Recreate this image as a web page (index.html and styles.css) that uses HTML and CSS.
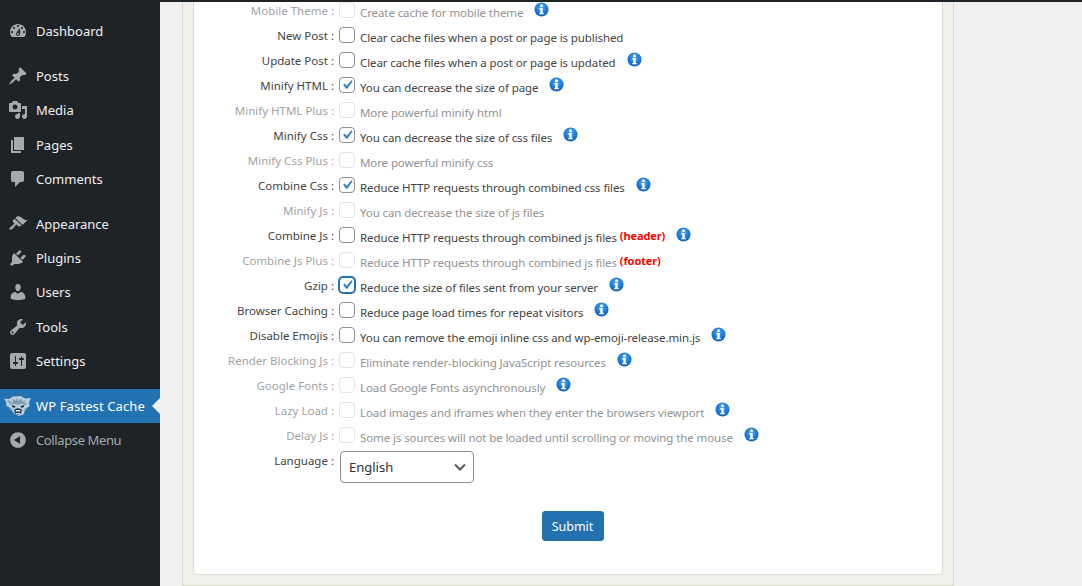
FILE: index.html
```html
<!DOCTYPE html>
<html lang="en">
<head>
<meta charset="utf-8">
<title>WP Fastest Cache</title>
<link rel="stylesheet" href="styles.css">
</head>
<body>
<svg class="sprite" width="0" height="0" aria-hidden="true">
  <defs>
    <radialGradient id="ig" cx="50%" cy="35%" r="70%">
      <stop offset="0" stop-color="#4ea6f2"/>
      <stop offset="0.6" stop-color="#1a78d8"/>
      <stop offset="1" stop-color="#0c5bb0"/>
    </radialGradient>
    <symbol id="info" viewBox="0 0 16 16">
      <circle cx="8" cy="8" r="7.5" fill="url(#ig)"/>
      <circle cx="8" cy="4.1" r="1.6" fill="#fff"/>
      <path d="M5.600 6.500h3.700v5.100h1.100v1.500H5.600v-1.500h1.100V8H5.600z" fill="#fff"/>
    </symbol>
    <symbol id="check" viewBox="0 0 20 20">
      <path d="M14.830 4.890l1.340.940-5.810 8.380H9.020L5.780 9.670l1.340-1.250 2.570 2.400z" fill="#3582c4"/>
    </symbol>
  </defs>
</svg>
<div class="topbar"></div>
<div class="app">
  <nav class="sidebar">
    <a class="item"><svg class="ic" viewBox="0 0 20 20"><path fill-rule="evenodd" d="M3.760 16h12.480c1.100-1.370 1.760-3.110 1.760-5 0-4.420-3.580-8-8-8s-8 3.580-8 8c0 1.890.660 3.630 1.760 5zM10 4c.550 0 1 .450 1 1s-.450 1-1 1-1-.450-1-1 .450-1 1-1zM6 6c.550 0 1 .450 1 1s-.450 1-1 1-1-.450-1-1 .450-1 1-1zm8 0c.550 0 1 .450 1 1s-.450 1-1 1-1-.450-1-1 .450-1 1-1zm-5.370 5.550L12 7v6c0 1.100-.900 2-2 2s-2-.900-2-2c0-.570.240-1.080.630-1.450zM4 10c.550 0 1 .450 1 1s-.450 1-1 1-1-.450-1-1 .450-1 1-1zm12 0c.550 0 1 .450 1 1s-.450 1-1 1-1-.450-1-1 .450-1 1-1zm-5 3c0-.550-.450-1-1-1s-1 .450-1 1 .450 1 1 1 1-.450 1-1z"/></svg><span>Dashboard</span></a>
    <div class="sep"></div>
    <a class="item"><svg class="ic" viewBox="0 0 20 20"><path d="M10.440 3.020l1.820-1.820 6.360 6.350-1.830 1.820c-1.050-.680-2.480-.570-3.410.360l-.750.750c-.920.930-1.040 2.350-.350 3.410l-1.830 1.820-2.410-2.410-2.800 2.790c-.420.420-3.380 2.710-3.800 2.290s1.860-3.390 2.280-3.810l2.790-2.790L4.100 9.360l1.830-1.820c1.050.690 2.480.570 3.400-.360l.750-.750c.930-.920 1.050-2.350.360-3.410z"/></svg><span>Posts</span></a>
    <a class="item"><svg class="ic" viewBox="0 0 20 20"><path fill-rule="evenodd" d="M13 11V4c0-.550-.450-1-1-1h-1.670L9 1H5L3.670 3H2c-.550 0-1 .450-1 1v7c0 .550.450 1 1 1h10c.550 0 1-.450 1-1zM7 4.500c1.380 0 2.500 1.120 2.500 2.500S8.380 9.500 7 9.500 4.500 8.380 4.500 7 5.620 4.500 7 4.500zM14 6h5v10.500c0 1.380-1.120 2.500-2.500 2.500S14 17.880 14 16.500s1.120-2.500 2.500-2.500c.170 0 .340.020.500.050V9h-3V6zm-4 8.050V13h2v3.500c0 1.380-1.120 2.500-2.500 2.500S7 17.880 7 16.500 8.120 14 9.500 14c.170 0 .340.020.500.050z"/></svg><span>Media</span></a>
    <a class="item"><svg class="ic" viewBox="0 0 20 20"><path d="M6 15V2h10v13H6zm-1 1h8v2H3V5h2v11z"/></svg><span>Pages</span></a>
    <a class="item"><svg class="ic" viewBox="0 0 20 20"><path d="M5 2h9c1.100 0 2 .900 2 2v7c0 1.100-.900 2-2 2h-2l-5 5v-5H5c-1.100 0-2-.900-2-2V4c0-1.100.900-2 2-2z"/></svg><span>Comments</span></a>
    <div class="sep"></div>
    <a class="item"><svg class="ic" viewBox="0 0 20 20"><path d="M14.480 11.060L7.410 3.990l1.500-1.500c.500-.560 2.300-.470 3.510.320 1.210.800 1.430 1.280 2.910 2.100 1.180.640 2.450 1.260 4.450.850zm-.710.710L6.700 4.700 4.930 6.470c-.390.390-.390 1.020 0 1.410l1.060 1.060c.390.390.390 1.030 0 1.420-.600.600-1.430 1.110-2.210 1.690-.350.260-.700.530-1.010.840C1.430 13.230.990 14.900 1.600 15.500c.600.610 2.270.160 3.610-1.180.310-.310.580-.660.840-1.010.580-.780 1.090-1.610 1.690-2.210.390-.390 1.020-.390 1.410 0l1.060 1.060c.390.390 1.020.390 1.410 0z"/></svg><span>Appearance</span></a>
    <a class="item"><svg class="ic" viewBox="0 0 20 20"><path d="M13.110 4.360L9.870 7.600 8 5.730l3.240-3.240c.350-.340 1.050-.200 1.560.320.520.510.660 1.210.310 1.550zm-8 1.770l.910-1.120 9.010 9.010-1.190.840c-.710.710-2.630 1.160-3.820 1.160H6.140L4.900 17.260c-.590.590-1.540.590-2.120 0-.590-.580-.590-1.530 0-2.120l1.240-1.240v-3.880c0-1.130.400-3.190 1.090-3.890zm7.260 3.970l3.240-3.240c.340-.350 1.040-.210 1.550.310.520.510.660 1.210.310 1.550l-3.240 3.250z"/></svg><span>Plugins</span></a>
    <a class="item"><svg class="ic" viewBox="0 0 20 20"><path d="M10 9.250c-2.270 0-2.730-3.440-2.730-3.440C7 4.020 7.820 2 9.970 2c2.160 0 2.980 2.020 2.710 3.810 0 0-.410 3.440-2.680 3.440zm0 2.570L12.720 10c2.390 0 4.520 2.330 4.520 4.530v2.490s-3.650 1.130-7.240 1.130c-3.650 0-7.240-1.130-7.240-1.130v-2.490c0-2.250 1.940-4.480 4.470-4.480z"/></svg><span>Users</span></a>
    <a class="item"><svg class="ic" viewBox="0 0 20 20"><path fill-rule="evenodd" d="M16.680 9.770c-1.340 1.340-3.300 1.670-4.950.990l-5.410 6.520c-.990.990-2.590.990-3.580 0s-.990-2.590 0-3.570l6.520-5.420c-.680-1.650-.350-3.610.990-4.950 1.280-1.280 3.120-1.620 4.720-1.060l-2.890 2.890 2.820 2.820 2.860-2.870c.530 1.580.180 3.390-1.080 4.650zM3.810 16.210c.400.390 1.040.390 1.430 0 .400-.400.400-1.040 0-1.430-.390-.400-1.030-.400-1.430 0-.390.390-.390 1.030 0 1.430z"/></svg><span>Tools</span></a>
    <a class="item"><svg class="ic" viewBox="0 0 20 20"><path fill-rule="evenodd" d="M18 16V4c0-1.100-.900-2-2-2H4c-1.100 0-2 .900-2 2v12c0 1.100.900 2 2 2h12c1.100 0 2-.900 2-2zM8 11h1c.550 0 1 .450 1 1s-.450 1-1 1H8v1.500c0 .280-.220.500-.500.500s-.500-.220-.500-.500V13H6c-.550 0-1-.450-1-1s.450-1 1-1h1V5.500c0-.280.220-.500.500-.500s.500.220.500.500V11zm5-2h-1c-.550 0-1-.450-1-1s.450-1 1-1h1V5.500c0-.280.220-.500.500-.500s.500.220.500.500V7h1c.550 0 1 .450 1 1s-.450 1-1 1h-1v5.500c0 .280-.220.500-.500.500s-.500-.220-.500-.500V9z"/></svg><span>Settings</span></a>
    <div class="sep"></div>
    <a class="item active">
      <svg class="logo" viewBox="0 0 30 22">
        <path d="M1 3.500l5 .5 4-2.500 8-.5 4 2.500 6-.5-2 4 .5 4-4 3-2 5.500-5 1.500-5-3-3-5-4-2-.5-4z" fill="#b9cede"/>
        <path d="M4 5l4 1-1 2.500 3-2-.5-3 3 2 2-2.500 1 3 3-2.500 1 3 3-1-1 3 3-.5-2 2.500-3-2-3 1-4 0-3-1-2 1.500z" fill="#7f9cb3"/>
        <path d="M9 10l3.500 1.200-1 1.800-2.500-1.200zM21 10l-3.500 1.200 1 1.800 2.500-1.200z" fill="#1f3648"/>
        <path d="M6 13l2 3 1-2zM24 13l-2 3-1-2z" fill="#7f9cb3"/>
        <path d="M11 14.500l4-1.500 4 1.500-1 4-3 1.200-3-1.200z" fill="#2a3c4b"/>
        <path d="M12.500 15l5 0-.500 1.500-4 0zM13 18l4 0-.500 1-3 0z" fill="#e8f0f5"/>
      </svg>
      <span>WP Fastest Cache</span>
    </a>
    <a class="item collapse"><svg class="ic" viewBox="0 0 20 20"><path fill-rule="evenodd" d="M10 2.160c4.330 0 7.840 3.510 7.840 7.840s-3.510 7.840-7.840 7.840S2.160 14.330 2.160 10 5.670 2.160 10 2.160zM12 14V6l-6 4z"/></svg><span>Collapse Menu</span></a>
  </nav>
  <main class="main">
    <div class="tabwrap">
      <form class="panel">
        <div class="row off"><span class="lab">Mobile Theme :</span><span class="cb"></span><span class="txt">Create cache for mobile theme</span><svg class="inf"><use href="#info"/></svg></div>
        <div class="row"><span class="lab">New Post :</span><span class="cb"></span><span class="txt">Clear cache files when a post or page is published</span></div>
        <div class="row"><span class="lab">Update Post :</span><span class="cb"></span><span class="txt">Clear cache files when a post or page is updated</span><svg class="inf"><use href="#info"/></svg></div>
        <div class="row"><span class="lab">Minify HTML :</span><span class="cb"><svg class="ck"><use href="#check"/></svg></span><span class="txt">You can decrease the size of page</span><svg class="inf"><use href="#info"/></svg></div>
        <div class="row off"><span class="lab">Minify HTML Plus :</span><span class="cb"></span><span class="txt">More powerful minify html</span></div>
        <div class="row"><span class="lab">Minify Css :</span><span class="cb"><svg class="ck"><use href="#check"/></svg></span><span class="txt">You can decrease the size of css files</span><svg class="inf"><use href="#info"/></svg></div>
        <div class="row off"><span class="lab">Minify Css Plus :</span><span class="cb"></span><span class="txt">More powerful minify css</span></div>
        <div class="row"><span class="lab">Combine Css :</span><span class="cb"><svg class="ck"><use href="#check"/></svg></span><span class="txt">Reduce HTTP requests through combined css files</span><svg class="inf"><use href="#info"/></svg></div>
        <div class="row off"><span class="lab">Minify Js :</span><span class="cb"></span><span class="txt">You can decrease the size of js files</span></div>
        <div class="row"><span class="lab">Combine Js :</span><span class="cb"></span><span class="txt">Reduce HTTP requests through combined js files</span><b class="red">(header)</b><svg class="inf"><use href="#info"/></svg></div>
        <div class="row off"><span class="lab">Combine Js Plus :</span><span class="cb"></span><span class="txt">Reduce HTTP requests through combined js files</span><b class="red">(footer)</b></div>
        <div class="row"><span class="lab">Gzip :</span><span class="cb focus"><svg class="ck"><use href="#check"/></svg></span><span class="txt">Reduce the size of files sent from your server</span><svg class="inf"><use href="#info"/></svg></div>
        <div class="row"><span class="lab">Browser Caching :</span><span class="cb"></span><span class="txt">Reduce page load times for repeat visitors</span><svg class="inf"><use href="#info"/></svg></div>
        <div class="row"><span class="lab">Disable Emojis :</span><span class="cb"></span><span class="txt">You can remove the emoji inline css and wp-emoji-release.min.js</span><svg class="inf"><use href="#info"/></svg></div>
        <div class="row off"><span class="lab">Render Blocking Js :</span><span class="cb"></span><span class="txt">Eliminate render-blocking JavaScript resources</span><svg class="inf"><use href="#info"/></svg></div>
        <div class="row off"><span class="lab">Google Fonts :</span><span class="cb"></span><span class="txt">Load Google Fonts asynchronously</span><svg class="inf"><use href="#info"/></svg></div>
        <div class="row off"><span class="lab">Lazy Load :</span><span class="cb"></span><span class="txt">Load images and iframes when they enter the browsers viewport</span><svg class="inf"><use href="#info"/></svg></div>
        <div class="row off"><span class="lab">Delay Js :</span><span class="cb"></span><span class="txt">Some js sources will not be loaded until scrolling or moving the mouse</span><svg class="inf"><use href="#info"/></svg></div>
        <div class="row lang"><span class="lab">Language :</span>
          <div class="select"><span>English</span><svg class="chev" viewBox="0 0 12 8"><path d="M1 1.500l5 5 5-5" fill="none" stroke="#50575e" stroke-width="2"/></svg></div>
        </div>
        <div class="actions"><button class="submit" type="button">Submit</button></div>
      </form>
    </div>
  </main>
</div>
</body>
</html>
```
FILE: styles.css
```css
* { box-sizing: border-box; }
html, body { margin: 0; height: 100%; overflow: hidden; }
body {
  background: #f0f0f0;
  font-family: "Noto Sans", "Open Sans", sans-serif;
  font-size: 11.5px;
  letter-spacing: -0.1px;
  color: #444;
  width: 1082px;
  height: 586px;
  display: flex;
  flex-direction: column;
}
.sprite { position: absolute; }
.topbar { height: 2px; background: #1d2327; flex: none; }
.app { flex: 1; display: flex; min-height: 0; }

.sidebar {
  width: 160px;
  flex: none;
  background: #1d2327;
  padding-top: 12px;
  display: flex;
  flex-direction: column;
  letter-spacing: 0;
}
.item {
  height: 34.25px;
  flex: none;
  display: flex;
  align-items: center;
  color: #f0f0f1;
  font-size: 13px;
  padding-left: 8px;
}
.item span { margin-left: 8px; }
.ic { width: 20px; height: 20px; fill: #a7aaad; flex: none; }
.sep { height: 10.8px; flex: none; }
.item.active {
  background: #2271b1;
  color: #fff;
  position: relative;
  padding-left: 3px;
  letter-spacing: 0.12px;
}
.item.active span { margin-left: 3px; }
.item.active::after {
  content: "";
  position: absolute;
  right: 0;
  top: 50%;
  margin-top: -8px;
  border: 8px solid transparent;
  border-right-color: #f0f0f0;
}
.logo { width: 30px; height: 22px; flex: none; }
.item.collapse { color: #a7aaad; letter-spacing: -0.38px; }

.main { flex: 1; padding-left: 22px; min-width: 0; }
.tabwrap {
  width: 772px;
  height: 584px;
  background: #f1efe9;
  border: solid #dcdcd0;
  border-width: 0 1px 1px;
  padding: 0 10px 10px;
}
.panel {
  background: #fff;
  height: 100%;
  border: solid #e0dfd6;
  border-width: 0 1px 1px;
  border-radius: 0 0 5px 5px;
  overflow: hidden;
}
.row {
  height: 25px;
  display: flex;
  align-items: center;
  white-space: nowrap;
}
.row:first-child { margin-top: -4px; }
.lab {
  width: 140px;
  flex: none;
  text-align: right;
  margin-right: 5px;
  position: relative;
  top: -0.500px;
  color: #444;
  letter-spacing: 0;
}
.cb {
  width: 16px;
  height: 16px;
  flex: none;
  border: 1px solid #8c8f94;
  border-radius: 4px;
  background: #fff;
  margin-right: 5px;
  position: relative;
  top: -1px;
}
.ck { position: absolute; left: -1px; top: -1px; width: 16px; height: 16px; transform: scale(1.15); }
.cb.focus { border-color: #2271b1; box-shadow: 0 0 0 1px #2271b1; }
.txt { position: relative; top: 2px; }
.inf { width: 15px; height: 15px; margin-left: 11px; position: relative; top: -1px; flex: none; }
.red { color: #f00; font-weight: 700; margin-left: 3px; font-size: 11px; position: relative; top: 0; }
.off .lab { color: #a3a3a3; }
.off .txt { color: #939393; }
.off .cb { border-color: #e2e4e7; }

.row.lang { height: 32px; align-items: flex-start; margin-top: 3px; }
.select {
  width: 134px;
  height: 32px;
  margin-left: 1px;
  border: 1px solid #8c8f94;
  border-radius: 4px;
  background: #fff;
  display: flex;
  align-items: center;
  justify-content: space-between;
  padding: 0 7px 0 8px;
  font-size: 13px;
  letter-spacing: 0;
  color: #2c3338;
}
.chev { width: 12px; height: 8px; }
.row.lang .lab { top: 2px; }
.actions { margin-top: 28px; display: flex; justify-content: center; padding-left: 9px; }
.submit {
  width: 62px;
  height: 30px;
  background: #2271b1;
  border: 1px solid #2271b1;
  border-radius: 3px;
  color: #fff;
  font: inherit;
  font-size: 12.5px;
  padding: 0;
}
```
